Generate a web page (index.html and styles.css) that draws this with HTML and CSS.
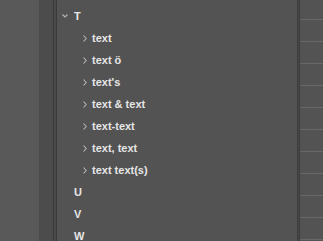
FILE: index.html
```html
<!DOCTYPE html>
<html lang="en">
<head>
    <meta charset="UTF-8">
    <title>Tree panel</title>
    <link rel="stylesheet" href="styles.css">
</head>
<body>
    <div class="app">
        <div class="side"></div>
        <div class="gutter"></div>
        <div class="rule"></div>
        <div class="gap"></div>
        <div class="rule"></div>

        <!-- Tree list -->
        <div class="tree">
            <div class="row top">
                <span class="twisty"><svg width="6" height="4" viewBox="0 0 6 4"><path d="M0.5 0.5 L3 3 L5.5 0.5" fill="none" stroke="#b4b4b4" stroke-width="1.1"/></svg></span>
                <span class="label">T</span>
            </div>
            <div class="row child"><span class="twisty"><svg width="4" height="7" viewBox="0 0 4 7"><path d="M0.5 0.5 L3.2 3.5 L0.5 6.5" fill="none" stroke="#b4b4b4" stroke-width="1.1"/></svg></span><span class="label">text</span></div>
            <div class="row child"><span class="twisty"><svg width="4" height="7" viewBox="0 0 4 7"><path d="M0.5 0.5 L3.2 3.5 L0.5 6.5" fill="none" stroke="#b4b4b4" stroke-width="1.1"/></svg></span><span class="label">text ö</span></div>
            <div class="row child"><span class="twisty"><svg width="4" height="7" viewBox="0 0 4 7"><path d="M0.5 0.5 L3.2 3.5 L0.5 6.5" fill="none" stroke="#b4b4b4" stroke-width="1.1"/></svg></span><span class="label">text's</span></div>
            <div class="row child"><span class="twisty"><svg width="4" height="7" viewBox="0 0 4 7"><path d="M0.5 0.5 L3.2 3.5 L0.5 6.5" fill="none" stroke="#b4b4b4" stroke-width="1.1"/></svg></span><span class="label">text &amp; text</span></div>
            <div class="row child"><span class="twisty"><svg width="4" height="7" viewBox="0 0 4 7"><path d="M0.5 0.5 L3.2 3.5 L0.5 6.5" fill="none" stroke="#b4b4b4" stroke-width="1.1"/></svg></span><span class="label">text-text</span></div>
            <div class="row child"><span class="twisty"><svg width="4" height="7" viewBox="0 0 4 7"><path d="M0.5 0.5 L3.2 3.5 L0.5 6.5" fill="none" stroke="#b4b4b4" stroke-width="1.1"/></svg></span><span class="label">text, text</span></div>
            <div class="row child"><span class="twisty"><svg width="4" height="7" viewBox="0 0 4 7"><path d="M0.5 0.5 L3.2 3.5 L0.5 6.5" fill="none" stroke="#b4b4b4" stroke-width="1.1"/></svg></span><span class="label">text text(s)</span></div>
            <div class="row top"><span class="twisty"></span><span class="label">U</span></div>
            <div class="row top"><span class="twisty"></span><span class="label">V</span></div>
            <div class="row top"><span class="twisty"></span><span class="label">W</span></div>
        </div>

        <div class="rule"></div>
        <div class="gap thin"></div>
        <div class="rule"></div>

        <!-- Right grid -->
        <div class="cells">
            <div class="cell first"></div>
            <div class="cell"></div>
            <div class="cell"></div>
            <div class="cell"></div>
            <div class="cell"></div>
            <div class="cell"></div>
            <div class="cell"></div>
            <div class="cell"></div>
            <div class="cell"></div>
            <div class="cell"></div>
            <div class="cell"></div>
        </div>
    </div>
</body>
</html>
```

FILE: styles.css
```css
body {
    margin: 0;
    padding: 0;
    background-color: #535353;
    font-family: "Liberation Sans", Arial, sans-serif;
}

.app {
    display: flex;
    height: 241px;
    overflow: hidden;
}

.side {
    width: 39px;
    background-color: #595959;
}

.gutter {
    width: 14px;
    background-color: #4c4c4c;
}

.rule {
    width: 1px;
    background-color: #3b3b3b;
}

.gap {
    width: 2px;
    background-color: #4a4a4a;
}

.gap.thin {
    width: 1px;
}

.tree {
    width: 240px;
    padding-top: 5px;
    background-color: #535353;
}

.row {
    display: flex;
    align-items: center;
    height: 22px;
    color: #e6e6e6;
    font-size: 11px;
    font-weight: bold;
    white-space: nowrap;
}

.row.top {
    padding-left: 5px;
}

.row.top .twisty {
    width: 12px;
}

.row.child {
    padding-left: 26px;
}

.row.child .twisty {
    width: 9px;
}

.twisty {
    display: flex;
    align-items: center;
}

.cells {
    flex: 1;
    background-color: #535353;
}

.cell {
    height: 21px;
    border-bottom: 1px solid #686868;
}

.cell.first {
    height: 19px;
}
```
